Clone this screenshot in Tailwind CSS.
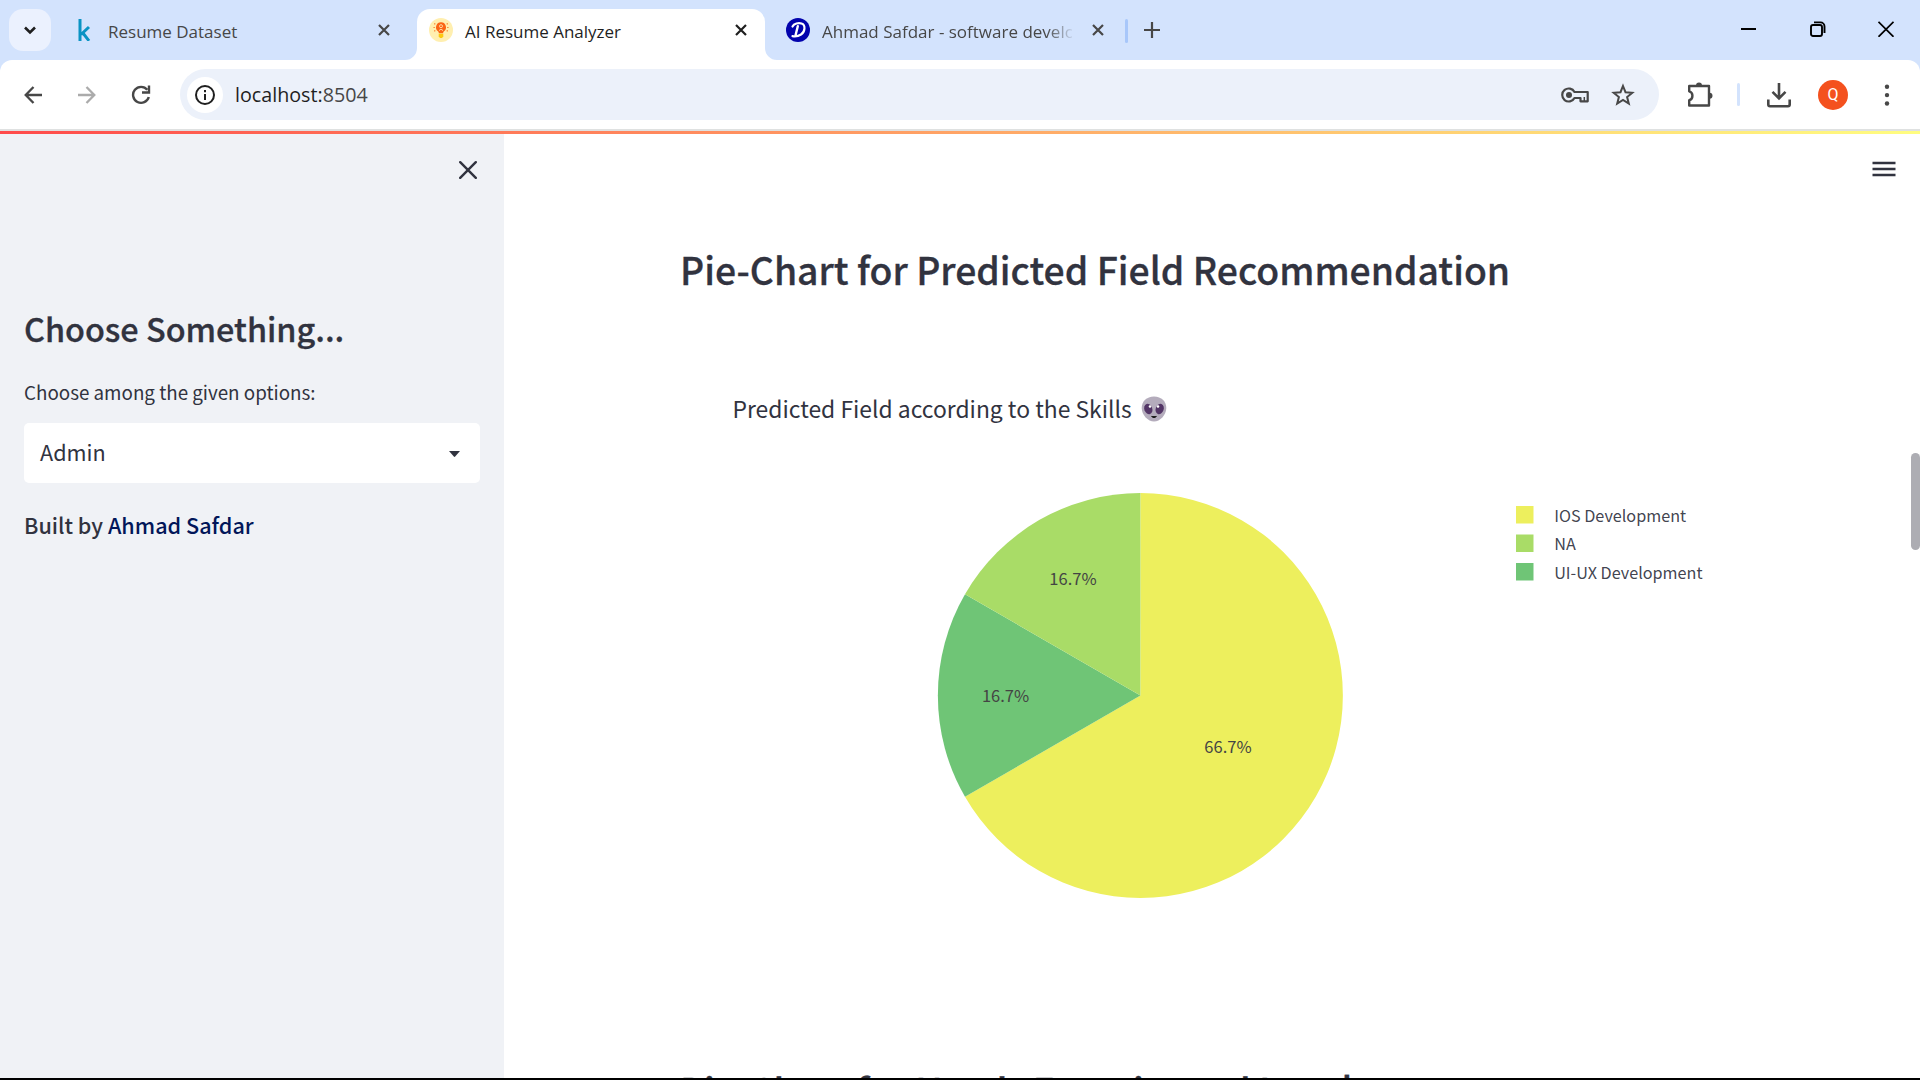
<!DOCTYPE html>
<html lang="en">
<head>
<meta charset="utf-8">
<title>AI Resume Analyzer</title>
<script src="https://cdn.jsdelivr.net/npm/@tailwindcss/browser@4"></script>
</head>
<body class="flex h-screen w-screen flex-col overflow-hidden bg-[#d3e3fd] font-['Noto_Sans_CJK_SC','Noto_Sans',sans-serif] text-[#31333f]">

<!-- Tab strip -->
<header class="flex h-[60px] shrink-0 pt-[9px] font-['Open_Sans',sans-serif] text-[17px] text-[#474747]">
  <button class="ml-[9px] flex h-[42px] w-[42px] items-center justify-center rounded-[14px] bg-[#ebf1fe]">
    <svg class="h-[42px] w-[42px]" viewBox="0 0 42 42" fill="none" stroke="#1f1f1f" stroke-width="2.6"><path d="M16 18.5l5 5 5-5"/></svg>
  </button>
  <div class="flex h-[42px] w-[366px] items-center pl-[27px]">
    <svg class="h-[22px] w-[13px] shrink-0" viewBox="0 0 13 22" fill="none" stroke="#0a93c4" stroke-width="3"><path d="M2 0v22M11 8l-8 7.5M4.500 13.500l6.500 8.300"/></svg>
    <span class="ml-[17px] mt-[4px] w-[270px] whitespace-nowrap leading-[24px]">Resume Dataset</span>
    <svg class="h-[12px] w-[12px] shrink-0" viewBox="0 0 12 12" fill="none" stroke="#474747" stroke-width="2.2"><path d="M1 1l10 10M11 1L1 11"/></svg>
  </div>
  <div class="relative flex h-[51px] w-[348px] items-start rounded-t-[13px] bg-white pl-[12px] text-[#1f1f1f]">
    <svg class="absolute -left-[12px] bottom-0 h-[12px] w-[12px]" viewBox="0 0 12 12" fill="white"><path d="M12 0v12H0A12 12 0 0 0 12 0z"/></svg>
    <svg class="absolute -right-[12px] bottom-0 h-[12px] w-[12px]" viewBox="0 0 12 12" fill="white"><path d="M0 0v12h12A12 12 0 0 1 0 0z"/></svg>
    <svg class="mt-[9px] h-[24px] w-[24px] shrink-0" viewBox="0 0 24 24"><circle cx="12" cy="12" r="12" fill="#ffefb0"/><path d="M12 4.300a5 5 0 0 0-3 9c.7.6.8 1.200.9 1.900h4.200c.1-.7.2-1.300.9-1.900a5 5 0 0 0-3-9z" fill="#fb6514"/><circle cx="12" cy="8.200" r="1.500" fill="none" stroke="#ffd9a0"/><path d="M10 12.500q2-2.500 4 0" stroke="#ffd9a0" fill="none"/><path d="M9.700 15.700h4.600v2.800l-1.300 1.500h-2l-1.300-1.500z" fill="#fdc910"/><path d="M5.300 5.600l1 .7M4.500 9.500h1.300M5.300 13.200l1-.7M18.700 5.600l-1 .7M19.500 9.500h-1.300M18.700 13.200l-1-.7" stroke="#fb7a24" stroke-width="1.200"/></svg>
    <span class="ml-[12px] mt-[11px] w-[270px] whitespace-nowrap leading-[24px]">AI Resume Analyzer</span>
    <svg class="mt-[15px] h-[12px] w-[12px] shrink-0" viewBox="0 0 12 12" fill="none" stroke="#1f1f1f" stroke-width="2.2"><path d="M1 1l10 10M11 1L1 11"/></svg>
  </div>
  <div class="flex h-[42px] items-start pl-[21px]">
    <svg class="mt-[9px] h-[24px] w-[24px] shrink-0" viewBox="0 0 24 24" fill="none" stroke="white" stroke-linecap="round" stroke-linejoin="round"><circle cx="12" cy="12" r="12" fill="#0303ad" stroke="none"/><path d="M6.500 8.500C8 5.500 12.500 4.600 15.500 5.500c4.500 1.400 3.500 8.500-.5 11-2.600 1.700-6 2-8.500 1.600" stroke-width="2.200"/><path d="M11.800 8.200L9.600 17" stroke-width="2.400"/></svg>
    <span class="ml-[12px] mt-[11px] w-[250px] overflow-hidden whitespace-nowrap leading-[24px] [mask-image:linear-gradient(to_right,black_224px,transparent_253px)]">Ahmad Safdar - software developer</span>
    <svg class="ml-[20px] mt-[15px] h-[12px] w-[12px] shrink-0" viewBox="0 0 12 12" fill="none" stroke="#474747" stroke-width="2.2"><path d="M1 1l10 10M11 1L1 11"/></svg>
    <div class="ml-[21px] mt-[10px] h-[24px] w-[3px] rounded-full bg-[#a8c7fa]"></div>
    <svg class="ml-[16px] mt-[13px] h-[16px] w-[16px]" viewBox="0 0 16 16" fill="none" stroke="#474747" stroke-width="2.2"><path d="M8 0v16M0 8h16"/></svg>
  </div>
  <div class="ml-auto mr-[26px] mt-[12px] flex h-[16px] gap-[52.500px]">
    <svg class="h-[16px] w-[16px]" viewBox="0 0 16 16" stroke="black" stroke-width="2"><path d="M0 8h15"/></svg>
    <svg class="h-[16px] w-[16px]" viewBox="0 0 16 16" fill="none" stroke="black" stroke-width="1.900"><rect x="1" y="4" width="11" height="11" rx="2"/><path d="M4 1.400h6.500a4 4 0 0 1 4 4V12"/></svg>
    <svg class="h-[16px] w-[16px]" viewBox="0 0 16 16" stroke="black" stroke-width="1.700"><path d="M.5.8l15 15M15.500.8l-15 15"/></svg>
  </div>
</header>

<!-- Address bar -->
<nav class="flex h-[69px] shrink-0 items-center rounded-t-[12px] bg-white">
  <svg class="ml-[24px] h-[18px] w-[18px]" viewBox="0 0 18 18" fill="none" stroke="#474747" stroke-width="2.300"><path d="M18 9H2M9.500 1L1.700 9l7.800 8"/></svg>
  <svg class="ml-[36px] h-[18px] w-[18px]" viewBox="0 0 18 18" fill="none" stroke="#ababab" stroke-width="2.300"><path d="M0 9h16M8.500 1l7.800 8-7.800 8"/></svg>
  <svg class="ml-[35px] h-[20px] w-[20px]" viewBox="0 0 20 20" fill="none" stroke="#474747" stroke-width="2.400"><path d="M16.300 4.800A8 8 0 1 0 17.800 12M18 .5v7h-7"/></svg>
  <div class="ml-[29px] flex h-[51px] w-[1479px] items-center rounded-full bg-[#ecf1fa] pl-[7px]">
    <div class="flex h-[36px] w-[36px] items-center justify-center rounded-full bg-white">
      <svg class="h-[20px] w-[20px]" viewBox="0 0 20 20" fill="none" stroke="#1f1f1f" stroke-width="2"><circle cx="10" cy="10" r="9"/><path d="M10 9v6M10 5v2.200"/></svg>
    </div>
    <span class="ml-[12px] font-['Open_Sans',sans-serif] text-[19.700px] leading-[28px] text-[#1f1f1f]">localhost:<span class="text-[#474747]">8504</span></span>
    <svg class="ml-auto h-[18px] w-[28px]" viewBox="0 0 28 18" fill="none" stroke="#474747" stroke-width="2.200" stroke-linejoin="round"><path d="M13.500 6A6.500 6.500 0 1 0 13.500 12H19.500V15.300H26.700V6z"/><circle cx="8" cy="9" r="3" fill="#474747" stroke="none"/><path d="M23.300 11v4" stroke-width="1.500"/></svg>
    <svg class="ml-[22px] mr-[24px] h-[24px] w-[24px]" viewBox="0 0 24 24" fill="none" stroke="#474747" stroke-width="2"><path d="M12 3l2.500 6.200 6.800.5-5.200 4.300 1.700 6.600L12 17l-5.800 3.600L7.900 14 2.700 9.700l6.800-.5z"/></svg>
  </div>
  <svg class="ml-[29px] h-[26px] w-[26px]" viewBox="0 0 26 26" fill="none" stroke="#474747" stroke-width="2.400" stroke-linejoin="round"><path d="M1.200 4h19.800v19.500H1.200v-5.300c4.300-1 4.300-7.900 0-8.900z"/><path d="M8 3.500a3 3 0 0 1 6 0zM21.500 10.700a3 3 0 0 1 0 6z" fill="#474747" stroke="none"/></svg>
  <div class="ml-[23px] h-[23px] w-[3px] rounded-sm bg-[#d3e3fd]"></div>
  <svg class="ml-[27px] h-[26px] w-[24px]" viewBox="0 0 24 26" fill="none" stroke="#474747" stroke-width="2.600"><path d="M12 1v15M5.500 9.800l6.500 6.500 6.500-6.500M1.300 17.500v5a1.700 1.700 0 0 0 1.700 1.700h18a1.700 1.700 0 0 0 1.700-1.700v-5"/></svg>
  <div class="ml-[27px] flex h-[30px] w-[30px] items-center justify-center rounded-full bg-[#f4511e] font-['Roboto',sans-serif] text-[16px] text-white">Q</div>
  <svg class="ml-[36px] h-[24px] w-[6px]" viewBox="0 0 6 24" fill="#474747"><circle cx="3" cy="3.700" r="2.200"/><circle cx="3" cy="12.100" r="2.200"/><circle cx="3" cy="20.500" r="2.200"/></svg>
</nav>
<div class="h-[2px] shrink-0 bg-[#dfe1e1]"></div>
<div class="h-[3px] shrink-0 bg-linear-to-r/srgb from-[#ff4b4b] to-[#fffd80]"></div>

<div class="flex h-[944px] shrink-0">
  <!-- Sidebar -->
  <aside class="flex w-[504px] shrink-0 flex-col bg-[#f0f2f6] px-[24px]">
    <button class="ml-auto mr-[3px] mt-[27px]">
      <svg class="h-[18px] w-[18px]" viewBox="0 0 18 18" fill="none" stroke="#31333f" stroke-width="2.400" stroke-linecap="round"><path d="M1.200 1.200l15.600 15.600M16.800 1.200L1.200 16.800"/></svg>
    </button>
    <h1 class="mt-[128px] whitespace-nowrap text-[32.400px] font-medium leading-[42px] [-webkit-text-stroke:0.3px]">Choose Something...</h1>
    <label class="mt-[29px] whitespace-nowrap text-[18.800px] leading-[28px]">Choose among the given options:</label>
    <div class="mt-[17px] flex h-[60px] items-center justify-between rounded-[5px] bg-white pl-[16px] pr-[20px]">
      <span class="pb-[2px] text-[21.600px] leading-[32px]">Admin</span>
      <svg class="mt-[2px] h-[6px] w-[11px]" viewBox="0 0 11 6" fill="#31333f"><path d="M0 0h11L6.200 5.600a1 1 0 0 1-1.400 0z"/></svg>
    </div>
    <p class="mt-[26px] whitespace-nowrap text-[21.600px] font-medium leading-[32px]">Built by <a class="text-[#021659]">Ahmad Safdar</a></p>
  </aside>

  <!-- Main content -->
  <main class="relative flex grow flex-col overflow-hidden bg-white pl-[176px]">
    <svg class="absolute right-[24px] top-[27px] h-[16px] w-[24px]" viewBox="0 0 24 16" stroke="#31333f" stroke-width="2.500"><path d="M.5 2h23M.5 8h23M.5 14h23"/></svg>
    <div class="absolute right-0 top-[319px] h-[97px] w-[9px] rounded-full bg-[#adadb3]"></div>
    <h2 class="mt-[107px] whitespace-nowrap text-[37.350px] font-medium leading-[56px] [-webkit-text-stroke:0.3px]">Pie-Chart for Predicted Field Recommendation</h2>
    <svg class="mt-[53px] h-[570px] w-[1100px] shrink-0" viewBox="680 350 1100 570">
      <text x="732.500" y="417.700" font-size="22.880" fill="#31333f">Predicted Field according to the Skills</text>
      <g>
        <path d="M1154 396.500c7.500 0 12.300 5 12.300 11.500 0 7-6.300 13.500-12.300 13.500s-12.300-6.500-12.300-13.500c0-6.500 4.800-11.500 12.300-11.500z" fill="#b4acbc"/>
        <ellipse cx="1148.300" cy="409" rx="4" ry="5.300" transform="rotate(-20 1148.300 409)" fill="#533566"/>
        <ellipse cx="1159.700" cy="409" rx="4" ry="5.300" transform="rotate(20 1159.700 409)" fill="#533566"/>
        <circle cx="1150" cy="406.500" r="1.300" fill="white"/><circle cx="1158" cy="406.500" r="1.300" fill="white"/>
        <path d="M1151.600 416.500q2.400 2.500 4.800 0z" fill="#1c1c1c" stroke="#1c1c1c"/>
      </g>
      <path d="M1140.400 695.500V493A202.500 202.500 0 1 1 965 796.750z" fill="#edef5d"/>
      <path d="M1140.400 695.500L965 796.750A202.500 202.500 0 0 1 965 594.250z" fill="#6fc576"/>
      <path d="M1140.400 695.500L965 594.250A202.500 202.500 0 0 1 1140.400 493z" fill="#a9dc67"/>
      <g font-size="16.500" fill="#444444" text-anchor="middle">
        <text x="1073" y="585">16.7%</text>
        <text x="1005.600" y="702.300">16.7%</text>
        <text x="1228" y="753.300">66.7%</text>
      </g>
      <path d="M1516 506h17.500v17.500H1516z" fill="#edef5d"/>
      <path d="M1516 534.500h17.500V552H1516z" fill="#a9dc67"/>
      <path d="M1516 563h17.500v17.500H1516z" fill="#6fc576"/>
      <g font-size="16.200" fill="#31333f" fill-opacity=".93">
        <text x="1554.200" y="521.900">IOS Development</text>
        <text x="1554.200" y="550">NA</text>
        <text x="1554.200" y="578.900">UI-UX Development</text>
      </g>
    </svg>
    <h2 class="mt-[141px] shrink-0 whitespace-nowrap text-[37.200px] font-medium leading-[56px] [-webkit-text-stroke:0.3px]">Pie-Chart for User's Experienced Level</h2>
  </main>
</div>
<footer class="h-[2px] shrink-0 bg-black"></footer>
</body>
</html>
